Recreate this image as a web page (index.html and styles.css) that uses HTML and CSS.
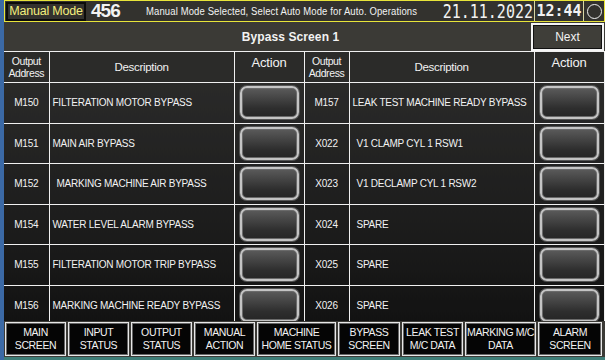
FILE: index.html
```html
<!DOCTYPE html>
<html lang="en">
<head>
  <meta charset="UTF-8">
  <title>Bypass Screen 1</title>
  <link rel="stylesheet" href="styles.css">
</head>
<body>
  <div class="screen">
    <div class="topbar">
      <div class="mode">Manual Mode</div>
      <div class="counter">456</div>
      <div class="message">Manual Mode Selected, Select Auto Mode for Auto. Operations</div>
      <div class="date">21.11.2022</div>
      <div class="time">12:44</div>
      <div class="status"><span class="ring"></span></div>
    </div>

    <div class="titlebar">
      <div class="title">Bypass Screen 1</div>
      <button class="next-btn">Next</button>
    </div>

    <div class="table-wrap">
      <table class="bypass">
        <colgroup>
          <col class="c-addr"><col class="c-desc"><col class="c-act">
          <col class="c-addr"><col class="c-desc"><col class="c-act">
        </colgroup>
        <tr class="head">
          <th class="addr-h">Output<br>Address</th>
          <th>Description</th>
          <th class="act-h">Action</th>
          <th class="addr-h">Output<br>Address</th>
          <th>Description</th>
          <th class="act-h">Action</th>
        </tr>
        <tr>
          <td class="addr">M150</td>
          <td class="desc">FILTERATION MOTOR BYPASS</td>
          <td class="act"><span class="bp-btn"></span></td>
          <td class="addr">M157</td>
          <td class="desc">LEAK TEST MACHINE READY BYPASS</td>
          <td class="act"><span class="bp-btn"></span></td>
        </tr>
        <tr>
          <td class="addr">M151</td>
          <td class="desc">MAIN AIR BYPASS</td>
          <td class="act"><span class="bp-btn"></span></td>
          <td class="addr">X022</td>
          <td class="desc ind">V1 CLAMP CYL 1 RSW1</td>
          <td class="act"><span class="bp-btn"></span></td>
        </tr>
        <tr>
          <td class="addr">M152</td>
          <td class="desc ind">MARKING MACHINE AIR BYPASS</td>
          <td class="act"><span class="bp-btn"></span></td>
          <td class="addr">X023</td>
          <td class="desc ind">V1 DECLAMP CYL 1 RSW2</td>
          <td class="act"><span class="bp-btn"></span></td>
        </tr>
        <tr>
          <td class="addr">M154</td>
          <td class="desc">WATER LEVEL ALARM BYPASS</td>
          <td class="act"><span class="bp-btn"></span></td>
          <td class="addr">X024</td>
          <td class="desc ind">SPARE</td>
          <td class="act"><span class="bp-btn"></span></td>
        </tr>
        <tr>
          <td class="addr">M155</td>
          <td class="desc">FILTERATION MOTOR TRIP BYPASS</td>
          <td class="act"><span class="bp-btn"></span></td>
          <td class="addr">X025</td>
          <td class="desc ind">SPARE</td>
          <td class="act"><span class="bp-btn"></span></td>
        </tr>
        <tr>
          <td class="addr">M156</td>
          <td class="desc">MARKING MACHINE READY BYPASS</td>
          <td class="act"><span class="bp-btn"></span></td>
          <td class="addr">X026</td>
          <td class="desc ind">SPARE</td>
          <td class="act"><span class="bp-btn"></span></td>
        </tr>
      </table>
    </div>

    <div class="nav">
      <button class="nav-btn">MAIN<br>SCREEN</button>
      <button class="nav-btn">INPUT<br>STATUS</button>
      <button class="nav-btn">OUTPUT<br>STATUS</button>
      <button class="nav-btn">MANUAL<br>ACTION</button>
      <button class="nav-btn">MACHINE<br>HOME STATUS</button>
      <button class="nav-btn">BYPASS<br>SCREEN</button>
      <button class="nav-btn">LEAK TEST<br>M/C DATA</button>
      <button class="nav-btn">MARKING M/C<br>DATA</button>
      <button class="nav-btn">ALARM<br>SCREEN</button>
    </div>
  </div>
</body>
</html>
```

FILE: styles.css
```css
body {
  margin: 0;
  width: 605px;
  height: 360px;
  overflow: hidden;
  background-color: #3b69a5;
  font-family: "Liberation Sans", Arial, sans-serif;
  color: #f2f2f2;
}
.screen {
  margin-left: 4px;
  height: 357px;
  background-color: #3b3a36;
  border-bottom: 3px solid #3f7e78;
  display: flex;
  flex-direction: column;
}

/* barra superior */
.topbar {
  height: 20px;
  border: 1px solid #e8e43a;
  background-color: #33322e;
  display: flex;
  align-items: center;
  white-space: nowrap;
}
.mode {
  margin-left: 1px;
  height: 15px;
  width: 76px;
  border: 2px solid #0c0c0a;
  color: #f2ee7c;
  font-size: 12.5px;
  letter-spacing: -0.2px;
  line-height: 15px;
  text-align: center;
}
.counter {
  width: 55px;
  padding-left: 5px;
  font-size: 19px;
  font-weight: bold;
  letter-spacing: -1px;
  line-height: 20px;
}
.message {
  width: 274px;
  font-size: 9.5px;
  letter-spacing: 0.12px;
  transform: scaleY(1.1);
}
.date {
  flex: 1;
  text-align: right;
  padding-right: 1px;
  font-family: "DejaVu Sans Mono", monospace;
  font-size: 15px;
  line-height: 20px;
  transform: scaleY(1.3);
}
.time {
  width: 48px;
  height: 20px;
  border-left: 1px solid #d8d6a4;
  border-right: 1px solid #d8d6a4;
  text-align: center;
  font-family: "DejaVu Sans Mono", monospace;
  font-weight: bold;
  font-size: 15px;
  line-height: 20px;
}
.time, .date { letter-spacing: 0; }
.status {
  width: 20px;
  display: flex;
  align-items: center;
  justify-content: center;
}
.ring {
  width: 13px;
  height: 13px;
  border: 1.5px solid #f0f0f0;
  border-radius: 50%;
}

/* titulo */
.titlebar {
  height: 29px;
  display: flex;
  align-items: center;
}
.title {
  flex: 1;
  padding-left: 46px;
  text-align: center;
  font-size: 12px;
  font-weight: bold;
  letter-spacing: 0.1px;
}
.next-btn {
  width: 73px;
  height: 28px;
  margin-top: 1px;
  margin-right: 1px;
  background-color: #3f3e39;
  border: 2px solid #f4f4f4;
  box-shadow: inset 0 0 0 1px #111;
  color: #f2f2f2;
  font-family: "Liberation Sans", Arial, sans-serif;
  font-size: 12px;
  padding: 0;
}

/* tabla */
.table-wrap {
  height: 270px;
  overflow: hidden;
}
.bypass {
  width: 600px;
  border-collapse: collapse;
  table-layout: fixed;
  background: linear-gradient(#2d2d2c, #121212);
}
.c-addr { width: 45px; }
.c-desc { width: 185px; }
.c-act { width: 70px; }
.bypass th, .bypass td {
  border: 1px solid #f0f0f0;
  padding: 0;
  font-weight: normal;
  white-space: nowrap;
  overflow: hidden;
}
.bypass th:first-child, .bypass td:first-child { border-left: none; }
.head th {
  height: 30px;
  background-color: #2b2b29;
  font-size: 11.5px;
  letter-spacing: -0.3px;
}
.head .addr-h {
  line-height: 12px;
  font-size: 10.5px;
  letter-spacing: -0.4px;
}
.head .act-h {
  vertical-align: top;
  line-height: 22px;
  font-size: 13px;
  letter-spacing: -0.2px;
}
.bypass td { height: 39.5px; }
.addr {
  text-align: center;
  font-size: 10px;
  letter-spacing: -0.2px;
}
.desc {
  padding-left: 3px !important;
  font-size: 10px;
  letter-spacing: -0.25px;
}
.desc.ind { padding-left: 7px !important; }
.act {
  text-align: center;
  vertical-align: middle;
}
.bp-btn {
  display: block;
  margin: 0 auto;
  width: 55px;
  height: 29px;
  border-radius: 7px;
  border: 2px solid #c4c4c4;
  box-shadow: inset 0 0 0 1px #6a6a6a, 0 0 0 1px #555;
  background: linear-gradient(#5b5b5b, #2e2e2e 70%, #262626);
}

/* navegacion */
.nav {
  flex: 1;
  display: grid;
  grid-template-columns: 63px 63px 63px 63px 81px 64px 63px 73px 66px;
}
.nav-btn {
  margin: 1px;
  padding: 0;
  background-color: #050505;
  border: 1px solid #e8e8e8;
  box-shadow: inset 0 0 0 1px #666;
  color: #f2f2f2;
  font-family: "Liberation Sans", Arial, sans-serif;
  font-size: 10.5px;
  letter-spacing: -0.4px;
  line-height: 13px;
  white-space: nowrap;
}
```
